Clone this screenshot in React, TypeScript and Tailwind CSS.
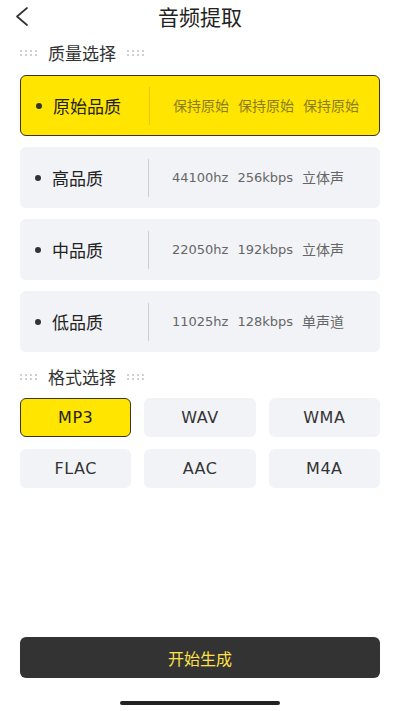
const qualities = [
  { name: '原始品质', info: ['保持原始', '保持原始', '保持原始'], active: true },
  { name: '高品质', info: ['44100hz', '256kbps', '立体声'], active: false },
  { name: '中品质', info: ['22050hz', '192kbps', '立体声'], active: false },
  { name: '低品质', info: ['11025hz', '128kbps', '单声道'], active: false },
];

const formats = ['MP3', 'WAV', 'WMA', 'FLAC', 'AAC', 'M4A'];

const latin = '"DejaVu Sans", "Noto Sans CJK SC", sans-serif';

function Dots() {
  return (
    <div className="grid grid-cols-4 gap-x-[3px] gap-y-[2px]">
      {Array.from({ length: 8 }).map((_, i) => (
        <span key={i} className="w-[2px] h-[2px] bg-[#d0d0d0]" />
      ))}
    </div>
  );
}

function SectionTitle({ title }: { title: string }) {
  return (
    <div className="flex items-center gap-[11px] px-5 h-[30px]">
      <Dots />
      <span className="text-[17px] text-[#333]">{title}</span>
      <Dots />
    </div>
  );
}

export default function App() {
  return (
    <div
      className="w-[400px] h-[711px] bg-white flex flex-col"
      style={{ fontFamily: '"Noto Sans CJK SC", "Noto Sans", sans-serif' }}
    >
      <header className="relative h-[34px] flex items-center justify-center">
        <svg
          className="absolute left-[12px] top-[6px]"
          width="20"
          height="22"
          viewBox="0 0 20 22"
          fill="none"
          stroke="#333"
          strokeWidth="1.7"
          strokeLinecap="round"
          strokeLinejoin="round"
        >
          <polyline points="15,2 5,10.5 15,19" />
        </svg>
        <h1 className="text-[21px] text-[#222]">音频提取</h1>
      </header>

      <div className="mt-[4px]">
        <SectionTitle title="质量选择" />
      </div>

      <div className="px-5 mt-[7px] flex flex-col gap-[11px]">
        {qualities.map((q) => (
          <div
            key={q.name}
            className={
              q.active
                ? 'h-[61px] rounded-md bg-[#ffe500] border border-[#3a3520] flex items-center'
                : 'h-[61px] rounded-md bg-[#f2f3f7] flex items-center'
            }
          >
            <div className="w-[128px] flex items-center pl-[15px]">
              <span className="w-[6px] h-[6px] rounded-full bg-[#333] mr-[11px]" />
              <span className="text-[17px] text-[#222]">{q.name}</span>
            </div>
            <div className={q.active ? 'w-px h-[38px] bg-[#e2ca00]' : 'w-px h-[38px] bg-[#cfcfd3]'} />
            <div
              className={
                q.active
                  ? 'ml-[23px] flex items-center gap-[9px] text-[#8a7d1e]'
                  : 'ml-[23px] flex items-center gap-[9px] text-[#666]'
              }
            >
              {q.info.map((t, i) =>
                /[0-9a-z]/.test(t) ? (
                  <span key={i} className="text-[13px]" style={{ fontFamily: latin }}>
                    {t}
                  </span>
                ) : (
                  <span key={i} className="text-[14px]">
                    {t}
                  </span>
                )
              )}
            </div>
          </div>
        ))}
      </div>

      <div className="mt-[10px]">
        <SectionTitle title="格式选择" />
      </div>

      <div className="px-5 mt-[6px] grid grid-cols-3 gap-x-[13px] gap-y-3">
        {formats.map((f, i) => (
          <div
            key={f}
            style={{ fontFamily: latin }}
            className={
              i === 0
                ? 'h-[39px] rounded-md bg-[#ffe500] border border-[#3a3520] flex items-center justify-center text-[16px] tracking-[0.5px] text-[#222]'
                : 'h-[39px] rounded-md bg-[#f2f3f7] flex items-center justify-center text-[16px] tracking-[0.5px] text-[#333]'
            }
          >
            {f}
          </div>
        ))}
      </div>

      <div className="flex-1" />

      <div className="px-5">
        <button className="w-full h-[41px] rounded-md bg-[#333333] text-[#ffe14a] text-[16px] flex items-center justify-center">
          开始生成
        </button>
      </div>

      <div className="h-[33px] flex items-end justify-center pb-[6px]">
        <span className="w-[160px] h-[4px] rounded-full bg-[#222]" />
      </div>
    </div>
  );
}
